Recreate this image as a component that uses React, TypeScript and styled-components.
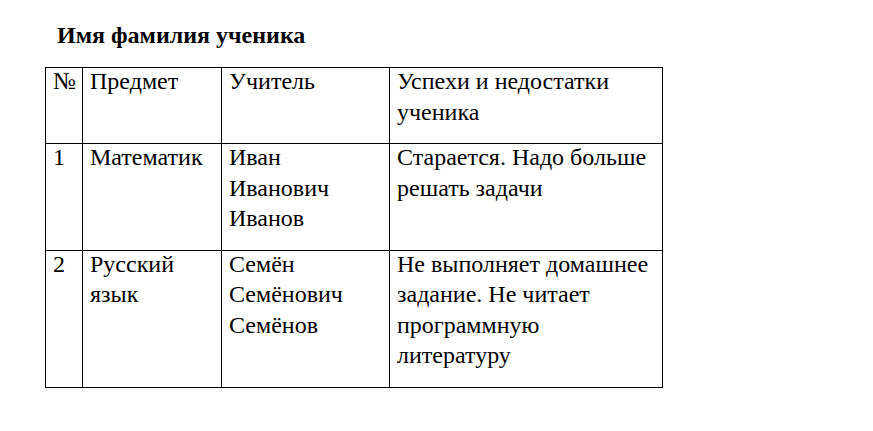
import React from "react";
import styled, { createGlobalStyle } from "styled-components";

const GlobalStyle = createGlobalStyle`
  html, body {
    margin: 0;
    padding: 0;
    background: #ffffff;
  }
  body {
    font-family: "Liberation Serif", "Times New Roman", serif;
    color: #000000;
  }
`;

const Page = styled.div`
  width: 873px;
  height: 431px;
  padding: 20px 0 0 45px;
  box-sizing: border-box;
`;

const Title = styled.h1`
  margin: 0 0 17px 12px;
  font-size: 24px;
  line-height: 30px;
  font-weight: bold;
`;

const Table = styled.table`
  border-collapse: collapse;
  table-layout: fixed;
  width: 617px;
`;

const Cell = styled.td<{ $width?: number }>`
  border: 1px solid #000;
  vertical-align: top;
  padding: 0 7px 16px 7px;
  font-size: 24px;
  line-height: 30.5px;
  width: ${(p) => (p.$width ? `${p.$width}px` : "auto")};
  box-sizing: border-box;
`;

// Word puts the first line a touch higher than the cell's top edge
const CellText = styled.div`
  margin-top: -2px;
`;

const rows: string[][] = [
  ["№", "Предмет", "Учитель", "Успехи и недостатки ученика"],
  ["1", "Математик", "Иван Иванович Иванов", "Старается. Надо больше решать задачи"],
  ["2", "Русский язык", "Семён Семёнович Семёнов", "Не выполняет домашнее задание. Не читает программную литературу"],
];

const widths = [37, 139, 168, 273];

export default function App() {
  return (
    <>
      <GlobalStyle />
      <Page>
        <Title>Имя фамилия ученика</Title>
        <Table>
          <tbody>
            {rows.map((row, i) => (
              <tr key={i}>
                {row.map((text, j) => (
                  <Cell key={j} $width={i === 0 ? widths[j] : undefined}>
                    <CellText>{text}</CellText>
                  </Cell>
                ))}
              </tr>
            ))}
          </tbody>
        </Table>
      </Page>
    </>
  );
}
